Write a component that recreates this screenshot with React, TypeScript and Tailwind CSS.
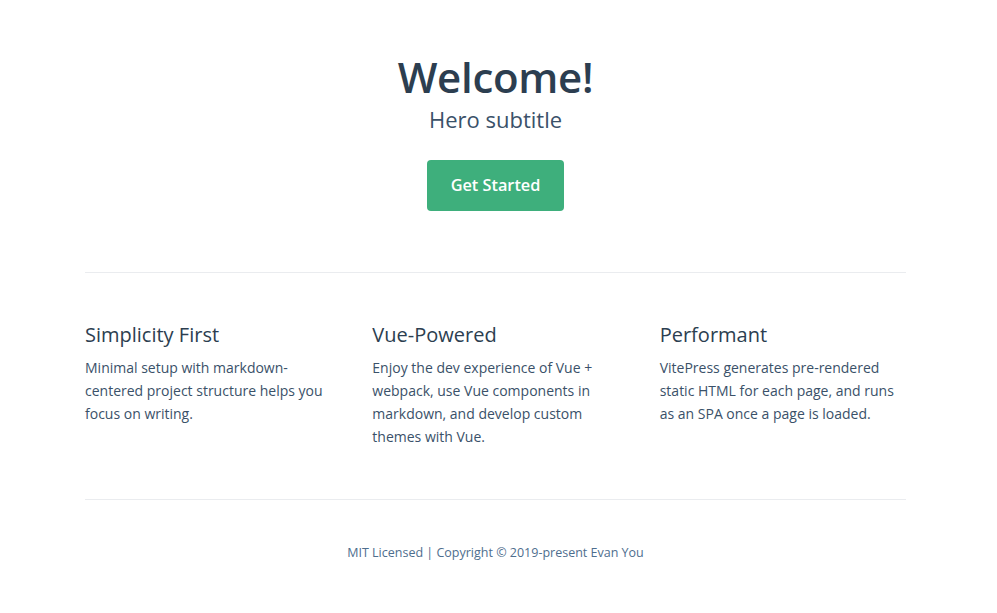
import React from 'react'

const features = [
  {
    title: 'Simplicity First',
    details: 'Minimal setup with markdown-centered project structure helps you focus on writing.',
  },
  {
    title: 'Vue-Powered',
    details:
      'Enjoy the dev experience of Vue + webpack, use Vue components in markdown, and develop custom themes with Vue.',
  },
  {
    title: 'Performant',
    details:
      'VitePress generates pre-rendered static HTML for each page, and runs as an SPA once a page is loaded.',
  },
]

const App = () => {
  return (
    <div className="min-h-[613px] bg-white font-['Open_Sans',sans-serif]">
      <main className="ml-[85px] w-[821px]">
        <header className="text-center pt-[51px] pb-[61px]">
          <h1 className="text-[42px] leading-[52px] tracking-[-0.3px] font-semibold text-[#2c3e50]">Welcome!</h1>
          <p className="text-[22px] leading-[32px] text-[#3a5169]">Hero subtitle</p>
          <a
            href="#"
            className="inline-flex items-center justify-center mt-[25px] h-[51px] px-[24px] rounded bg-[#3eaf7c] text-white text-[16.3px] font-semibold"
          >
            Get Started
          </a>
        </header>

        <section className="flex justify-between items-start border-t border-[#eaecef] pt-[48px] pb-[51px]">
          {features.map((feature, index) => (
            <div key={index} className="basis-[30%] max-w-[30%] grow">
              <h2 className="text-[20px] leading-[28px] font-medium text-[#2c3e50]">{feature.title}</h2>
              <p className="mt-[7px] text-[14px] leading-[23px] text-[#3a5169]">{feature.details}</p>
            </div>
          ))}
        </section>

        <footer className="border-t border-[#eaecef] pt-[43px] text-center text-[12.5px] leading-[20px] text-[#4e6e8e]">
          MIT Licensed | Copyright © 2019-present Evan You
        </footer>
      </main>
    </div>
  )
}

export default App
